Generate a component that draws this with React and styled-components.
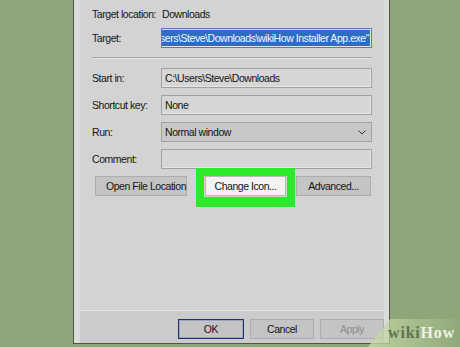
import React from 'react'
import styled, {createGlobalStyle} from 'styled-components'

const GlobalStl = createGlobalStyle`
  html, body {
    margin: 0;
    padding: 0;
    background: #8fa67b;
  }
  * {
    box-sizing: border-box;
  }
`

const PageStl = styled.div`
  position: relative;
  width: 460px;
  height: 347px;
  overflow: hidden;
  background: #8fa67b;
  padding-left: 73px;
  font-family: "Liberation Sans", Arial, sans-serif;
  font-size: 10.5px;
  letter-spacing: -0.45px;
  color: #141414;
`

const WindowStl = styled.div`
  width: 317px;
  height: 344px;
  display: flex;
  flex-direction: column;
  background: #dbdbdb;
  border: 1px solid #4d5846;
  border-top: none;
  padding: 0 5px 0 6px;
`

const PanelStl = styled.div`
  height: 311px;
  display: flex;
  flex-direction: column;
  background: #d3d3d3;
  border-bottom: 1px solid #e4e4e4;
  padding: 4px 12px 0 12px;
`

const RowStl = styled.div`
  display: grid;
  grid-template-columns: 69px 1fr;
  align-items: center;
  height: 20px;
  margin-top: ${p => p.$mt || 0}px;
`

const LabelStl = styled.span`
  white-space: nowrap;
`

const FieldStl = styled.div`
  height: 20px;
  display: flex;
  align-items: center;
  padding: 0 3px;
  overflow: hidden;
  white-space: nowrap;
  background: ${p => p.$select ? '#c7c7c7' : '#d6d6d6'};
  border: 1px solid ${p => p.$focus ? '#5f79b3' : '#a2a2a2'};
  box-shadow: ${p => p.$select ? 'none' : 'inset -1px -1px 0 #e6e6e6'};
  justify-content: ${p => p.$end ? 'flex-end' : 'flex-start'};
`

const SelectedTextStl = styled.span`
  flex: none;
  background: #2f6cc4;
  color: #f4f7ff;
  height: 16px;
  line-height: 16px;
  padding: 0 1px;
  margin-right: -2px;
`

const ChevronStl = styled.svg`
  margin-left: auto;
  margin-right: 2px;
`

const SeparatorStl = styled.div`
  height: 1px;
  margin-top: 9px;
  background: #a6a6a6;
  box-shadow: 0 1px 0 #e2e2e2;
`

const ButtonsRowStl = styled.div`
  display: flex;
  align-items: center;
  margin-top: 7px;
  padding-left: 3px;
`

const ButtonStl = styled.div`
  position: relative;
  flex: none;
  width: ${p => p.$w}px;
  height: 20px;
  margin-left: ${p => p.$ml || 0}px;
  padding-left: ${p => p.$pl || 0}px;
  display: flex;
  align-items: center;
  justify-content: center;
  white-space: nowrap;
  background: ${p => p.$hot ? '#f3f3f3' : '#c4c4c4'};
  border: 1px solid ${p => p.$def ? '#24306c' : p.$hot ? '#b9b9b9' : '#adadad'};
  box-shadow: ${p => p.$def ? 'inset 0 0 0 1px #9aa3c6' : 'none'};
  color: ${p => p.$off ? '#8c8c8c' : '#141414'};
`

const HighlightStl = styled.div`
  position: absolute;
  top: -9px;
  left: -10px;
  right: -10px;
  bottom: -12px;
  border: 8px solid #2de92a;
  border-bottom-width: 10px;
  pointer-events: none;
`

const FooterStl = styled.div`
  flex: 1;
  display: flex;
  justify-content: flex-end;
  align-items: flex-start;
  gap: 6px;
  padding-top: 8px;
  background: #cbcbcb;
`

const WatermarkStl = styled.div`
  position: absolute;
  right: 0;
  bottom: 0;
  width: 92px;
  height: 28px;
  display: flex;
  align-items: center;
  justify-content: flex-end;
  padding-right: 5px;
  background: linear-gradient(90deg, rgba(196, 216, 166, 0.85), rgba(150, 178, 120, 0.25));
  clip-path: polygon(24% 0, 100% 0, 100% 100%, 0 100%);
  font-family: "Liberation Serif", "Times New Roman", serif;
  font-weight: bold;
  font-size: 16px;
  letter-spacing: 0.8px;
`

const WikiStl = styled.span`
  color: #5f7450;
`

const HowStl = styled.span`
  color: #eef3e6;
`

export default function App() {
  return (
    <PageStl>
      <GlobalStl />
      <WindowStl>
        <PanelStl>
          <RowStl>
            <LabelStl>Target location:</LabelStl>
            <span style={{paddingLeft: 1}}>Downloads</span>
          </RowStl>
          <RowStl $mt={4}>
            <LabelStl>Target:</LabelStl>
            <FieldStl $focus $end>
              <SelectedTextStl>"C:\Users\Steve\Downloads\wikiHow Installer App.exe"</SelectedTextStl>
            </FieldStl>
          </RowStl>

          <SeparatorStl />

          <RowStl $mt={10}>
            <LabelStl>Start in:</LabelStl>
            <FieldStl>C:\Users\Steve\Downloads</FieldStl>
          </RowStl>
          <RowStl $mt={7}>
            <LabelStl>Shortcut key:</LabelStl>
            <FieldStl>None</FieldStl>
          </RowStl>
          <RowStl $mt={7}>
            <LabelStl>Run:</LabelStl>
            <FieldStl $select>
              Normal window
              <ChevronStl width="8" height="5" viewBox="0 0 8 5">
                <path d="M0.5 0.5 L4 4 L7.5 0.5" fill="none" stroke="#333" strokeWidth="1" />
              </ChevronStl>
            </FieldStl>
          </RowStl>
          <RowStl $mt={7}>
            <LabelStl>Comment:</LabelStl>
            <FieldStl />
          </RowStl>

          <ButtonsRowStl>
            <ButtonStl $w={92} $pl={10}>Open File Location</ButtonStl>
            <ButtonStl $w={81} $ml={18} $hot>
              Change Icon...
              <HighlightStl />
            </ButtonStl>
            <ButtonStl $w={75} $ml={10}>Advanced...</ButtonStl>
          </ButtonsRowStl>
        </PanelStl>

        <FooterStl>
          <ButtonStl $w={66} $def>OK</ButtonStl>
          <ButtonStl $w={64}>Cancel</ButtonStl>
          <ButtonStl $w={64} $off>Apply</ButtonStl>
        </FooterStl>
      </WindowStl>

      <WatermarkStl>
        <WikiStl>wiki</WikiStl>
        <HowStl>How</HowStl>
      </WatermarkStl>
    </PageStl>
  )
}
